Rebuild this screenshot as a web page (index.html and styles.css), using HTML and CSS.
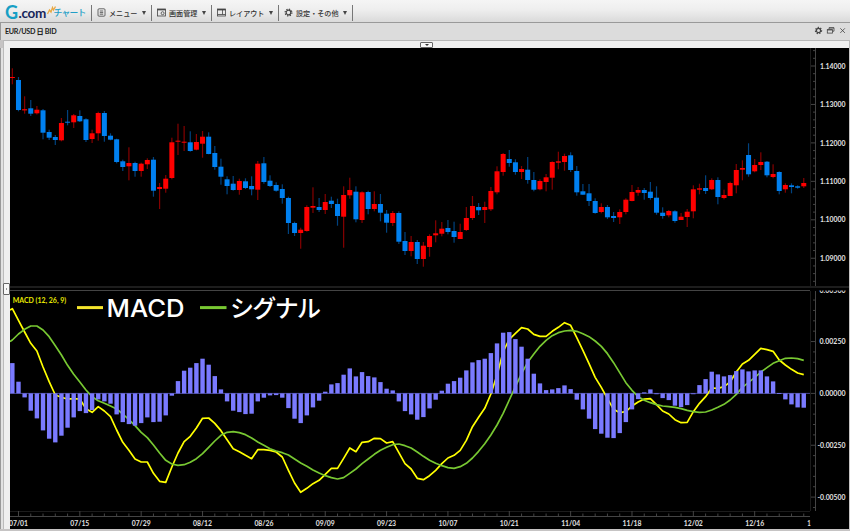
FILE: index.html
```html
<!DOCTYPE html>
<html lang="ja">
<head>
  <meta charset="UTF-8" />
  <meta name="viewport" content="width=device-width, initial-scale=1" />
  <title>G.comチャート</title>
  <link rel="stylesheet" href="styles.css">
</head>
<body>

  <header class="toolbar">
    <div class="logo">
      <span class="logo-g">G</span><span class="logo-com">.com</span>
      <svg class="logo-mark" viewBox="0 0 9 9"><path d="M0.5 8 L2.5 4 L4 6 L5.5 1.5 L6.5 4 L8.5 0.5" /></svg>
      <span class="logo-chart">チャート</span>
    </div>
    <div class="menu menu-main">
      <svg class="icon" viewBox="0 0 9 9"><rect x="1" y="0.8" width="7" height="7.4" rx="1" /><path d="M2.8 3H6.2M2.8 4.6H6.2M2.8 6.2H6.2" /></svg>
      <span class="label">メニュー</span><i class="arrow"></i>
    </div>
    <div class="menu menu-screen">
      <svg class="icon" viewBox="0 0 9 9"><rect x="0.5" y="1" width="8" height="7" /><path d="M0.5 1.7H8.5" stroke-width="1.3" /><circle cx="5.6" cy="5.2" r="1.5" /></svg>
      <span class="label">画面管理</span><i class="arrow"></i>
    </div>
    <div class="menu menu-layout">
      <svg class="icon" viewBox="0 0 9 9"><rect x="0.5" y="1" width="8" height="7" /><path d="M0.5 1.7H8.5" stroke-width="1.4" /><path d="M5.5 2V6.5M0.5 6.5H8.5" /></svg>
      <span class="label">レイアウト</span><i class="arrow"></i>
    </div>
    <div class="menu menu-settings">
      <svg class="icon gear" viewBox="0 0 9 9"><circle cx="4.5" cy="4.5" r="2.3" /><circle class="teeth" cx="4.5" cy="4.5" r="3.4" /></svg>
      <span class="label">設定・その他</span><i class="arrow"></i>
    </div>
  </header>

  <div class="titlebar">
    <span class="pair">EUR/USD 日 BID</span>
    <div class="window-buttons">
      <svg class="icon gear" viewBox="0 0 9 9"><circle cx="4.5" cy="4.5" r="2.1" /><circle class="teeth" cx="4.5" cy="4.5" r="3.1" /></svg>
      <svg class="icon" viewBox="0 0 9 9"><path d="M3 3V1.7H8V5.2H6.7M3 2H8" /><rect x="1.3" y="3.6" width="5.2" height="3.5" /><path d="M1.3 4H6.5" /></svg>
      <svg class="icon" viewBox="0 0 9 9"><path d="M2.3 2.3L6.9 6.9M6.9 2.3L2.3 6.9" /></svg>
    </div>
  </div>

  <div class="top-strip">
    <button class="toggle toggle-top" aria-label="top"><i></i></button>
  </div>

  <main class="workspace">
    <aside class="gutter">
      <button class="toggle toggle-left" aria-label="left"><i></i></button>
    </aside>
    <svg class="chart" id="chart" viewBox="10 48 839 481">
      <defs>
        <clipPath id="macd-clip"><rect x="10" y="290.5" width="839" height="239" /></clipPath>
      </defs>
      <g id="axes"></g>
      <g id="candles"></g>
      <g id="macd-panel" clip-path="url(#macd-clip)"></g>
      <text class="indicator" x="12.7" y="303.4" textLength="53.5" lengthAdjust="spacingAndGlyphs">MACD (12, 26, 9)</text>
      <path class="legend-line macd" d="M77 307.6H103" />
      <text class="legend legend-latin" x="106.500" y="316.800" textLength="78" lengthAdjust="spacingAndGlyphs">MACD</text>
      <path class="legend-line signal" d="M200 307.6H226.500" />
      <text class="legend" x="230" y="316.500" textLength="91">シグナル</text>
    </svg>
  </main>

  <script src="chart.js"></script>
</body>
</html>
```

FILE: styles.css
```css
* {
  box-sizing: border-box;
}
body {
  margin: 0;
  width: 850px;
  height: 531px;
  display: flex;
  flex-direction: column;
  overflow: hidden;
  background: #c6c4c4;
  font-family: Lato, "Noto Sans CJK JP", sans-serif;
  color: #222;
}
.toolbar {
  display: flex;
  align-items: center;
  height: 23px;
  padding: 4px 0 1px 5px;
  background: linear-gradient(#f5f5f5, #eee 45%, #dadada);
  border-bottom: 1px solid #999;
}
.logo {
  display: flex;
  align-items: flex-start;
  width: 86px;
  height: 18px;
  white-space: nowrap;
}
.logo-g {
  width: 13.5px;
  font: bold 18px/16px Lato, sans-serif;
  color: #169fc5;
}
.logo-com {
  width: 28px;
  font: bold 13.5px/18px Lato, sans-serif;
  letter-spacing: -0.3px;
  color: #17265a;
}
.logo-mark {
  width: 9px;
  height: 9px;
  margin: 2px -2px 0 0;
  fill: none;
  stroke: #e9a944;
  stroke-width: 1.3;
}
.logo-chart {
  font: 500 8.8px/18px "Noto Sans CJK JP", sans-serif;
  letter-spacing: -0.8px;
  color: #229ec6;
}
.menu {
  display: flex;
  align-items: center;
  height: 16px;
  padding-left: 5px;
  border-left: 1px solid #777;
}
.menu-main { width: 60px; }
.menu-screen { width: 60px; }
.menu-layout { width: 67px; }
.menu-settings {
  width: 75px;
  border-right: 1px solid #777;
}
.icon {
  width: 9px;
  height: 9px;
  flex: none;
  fill: none;
  stroke: #444;
  stroke-width: 0.8;
}
.gear circle { stroke-width: 1.2; }
.gear .teeth {
  stroke-width: 1.2;
  stroke-dasharray: 1.35 1.32;
}
.label {
  margin-left: 3px;
  font: 500 7.1px/16px "Noto Sans CJK JP", sans-serif;
  white-space: nowrap;
  color: #333;
}
.arrow {
  margin: 1px 5.5px 0 auto;
  border: 2px solid transparent;
  border-top: 4px solid #444;
  border-bottom: 0;
}
.titlebar {
  display: flex;
  justify-content: space-between;
  align-items: center;
  height: 17px;
  padding: 0 3px 2px 5px;
  background: #dcdcdc;
  border-left: 1px solid #999;
}
.pair {
  margin-left: -1px;
  font-size: 7.2px;
  font-weight: bold;
  letter-spacing: -0.3px;
}
.window-buttons {
  display: flex;
  gap: 3px;
}
.top-strip {
  display: flex;
  justify-content: center;
  height: 8px;
  margin-left: 3px;
  padding-top: 1px;
  background: #f0f0f0;
  border-top: 1px solid #b8b8b8;
  border-left: 1px solid #bbb;
  border-right: 1px solid #bbb;
}
.toggle {
  display: flex;
  align-items: center;
  justify-content: center;
  padding: 0;
  background: #f8f8f8;
  border: 1px solid #666;
  border-radius: 1px;
}
.toggle-top {
  width: 13px;
  height: 6px;
}
.toggle-top i {
  border: 2px solid transparent;
  border-top-color: #333;
  border-bottom: 0;
}
.workspace {
  display: flex;
  height: 481px;
}
.gutter {
  display: flex;
  align-items: flex-start;
  justify-content: flex-end;
  width: 10px;
  padding-top: 235px;
  background: linear-gradient(90deg, #999 0 1px, #e2e2e2 1px 3px, #bbb 3px 4px, #efefef 4px);
}
.toggle-left {
  width: 7px;
  height: 12px;
}
.toggle-left i {
  border: 1.5px solid transparent;
  border-left-color: #333;
  border-right: 0;
}
.chart {
  width: 839px;
  height: 481px;
  background: #000;
}
.axis {
  fill: none;
  stroke: #444;
  stroke-width: 1;
}
.axis-faint {
  fill: none;
  stroke: #1c1c1c;
}
.splitter { fill: #1d1d1d; }
.tick-label {
  fill: #e2e2e2;
  font-size: 7.4px;
  font-weight: bold;
}
.up { fill: #f00; }
.down { fill: #0080f0; }
.wick.up { fill: #850000; }
.wick.down { fill: #00427f; }
.bar { fill: #7a7aff; }
.zero {
  stroke: #5959b5;
  stroke-width: 0.8;
}
.line {
  fill: none;
  stroke-width: 1.7;
  stroke-linejoin: round;
}
.macd { stroke: #ff0; }
.signal { stroke: #78c832; }
.indicator {
  fill: #e8e800;
  font-size: 7px;
  font-weight: bold;
}
.legend {
  fill: #fff;
  font: 500 24px "Noto Sans CJK JP", sans-serif;
}
.legend-latin {
  font: 500 24.5px Inter, sans-serif;
}
.legend-line { stroke-width: 3; }
.legend-line.macd { stroke: #f5e52c; }
```

FILE: chart.js
```js
const X0 = 12.35;
const STEP = 6.135;

// high, body top, body bottom, low, direction (1 = up)
const candles = [
  [68.3,77,78,84.3,1],[77,80,110,111.3,0],[96.3,109.2,110.4,113.7,1],[100,108.3,113.7,116,0],[106,109.7,113.3,114.5,1],
  [109,110.3,132.7,139.3,0],[129.7,132,137.7,140,0],[135,137,140,145,0],[118,123,140.3,141.3,1],[110,121.7,122.7,125.3,0],
  [114,115.3,122.3,128,1],[110.3,116,121.3,122,0],[118.3,119.3,140,142,0],[129.7,133.3,139,143,1],[111.7,113,133.3,140.7,1],
  [111,113,136,141.7,0],[133.3,135.7,139.7,140.3,0],[138.7,139.3,162,163.3,0],[159.7,161.3,167,171,0],[147.3,163,166.3,180.3,1],
  [161.7,163,171,176.7,0],[162.7,163.7,171,176.7,1],[158.3,160,164.3,169,1],[157,159.7,190.7,196.7,0],[183,187,189,209,1],
  [175,178.7,188.7,192.7,1],[137.7,142.3,178,179.3,1],[123.7,140.7,141.7,155,1],[126,141.7,142.7,151,1],[131.3,142.3,151,151.7,0],
  [134,142,149.7,150.3,1],[131,136.7,143.7,157.7,1],[132.3,136.7,154,154.3,0],[146,153,167,169.7,0],[158.7,166.7,176.7,184.7,0],
  [176.3,179.3,186,194.3,0],[176,183.7,190,190.7,0],[178.7,181,190,194.7,1],[178.3,181.3,188,189,0],[176.3,186,189.3,195.3,0],
  [161,163.7,189.7,200,1],[157,163.3,182,183.7,0],[175.3,180.7,186,187,0],[182.3,185,190.7,191.7,0],[184.3,189,198,203.7,0],
  [196.7,198,223,234,0],[221.7,223,233,236,0],[227.7,229.7,233,248.7,1],[205.3,207,231,231.7,1],[187.3,206,207.7,213,1],
  [198,207,210,212,0],[194,202,210,214,1],[196.7,200.7,204,208,0],[198.7,204,216,225.7,0],[186.3,195,216.7,247.7,1],
  [177.7,190,195.3,198.7,1],[186.3,191.7,219.3,222.3,0],[191.3,192.3,220,223,1],[190.7,192,209,214.3,0],[191.3,204,209,211.3,1],
  [194,204,212.7,221.3,0],[210,213.7,222.7,232.7,0],[211,213,223,226,1],[211.3,213,241.7,244,0],[232,241,251,255,0],
  [236,242,251,256.3,1],[240,242,259,264,0],[242,245.7,259,266.7,1],[234.3,236,247,256.7,1],[220.3,233.3,235.3,242.3,1],
  [222,228.7,233.7,236.3,1],[220,228,232,234.3,0],[221.7,231,237,242.7,0],[223.7,232,239,239,1],[207,218,230,231,1],
  [196,206,218,220,1],[203,207,210.3,215,0],[201.7,207,210,223,1],[187,191,209.3,211,1],[166.3,171.3,192.3,194.3,1],
  [153,154,172,175.7,1],[150,159,163,166.7,0],[159.3,162.3,172,174.7,0],[166,169,172,179,1],[157,169.7,180,183.7,0],
  [172,180,189.7,191.3,0],[179.3,181,189.3,190.3,1],[174,177.3,182,191.3,1],[161.3,162,177.7,189.7,1],[151.7,161.3,162.7,169.3,1],
  [153.7,156,162,170.7,1],[152.3,155.3,170,172,0],[166,171,192.3,195.7,0],[184,191.3,194.7,195,0],[184,193.3,201,206,0],
  [198.3,201,213,213.7,0],[203.3,207,212,213.3,1],[205,207,217.3,219,0],[212,216,218,222,0],[209.3,212,217.3,224,1],
  [198.3,199.7,212,214.3,1],[185,192,201,201.3,1],[187,190,192.7,195.7,1],[188,190,193,199.7,0],[182,191.7,198,199.7,0],
  [186.3,197.7,212.7,214.7,0],[207.3,212.7,216,218.7,0],[210,211,215.3,217.3,1],[210.3,211.3,221,222.7,0],[213,216.7,220,220,1],
  [209,211.7,217,227,1],[185.3,189.3,211.3,218.3,1],[183.7,188.3,189.7,194.3,1],[175.3,188,191,194,0],[178.3,180,189.3,190,1],
  [177.3,180,197,204.3,0],[189.7,195,198,199.3,1],[181.7,183,196,196,1],[164,170,185.3,193.3,1],[160.3,168,169.7,180.3,1],
  [143.3,155,174.3,176.7,0],[159,165,171.3,172.3,1],[152.3,162,165,170,1],[161,161.7,175.3,177.3,0],[164.3,174,177,178.3,1],
  [171.3,172,191,194.3,0],[183.3,185,189.3,192.7,1],[183.3,185.3,187,193.3,0],[185.3,186.3,187.7,188.7,0],[178,183,186.3,188,1]
];

// bar heights from the zero line
const histogram = [
  30.3,11.7,-4,-17.3,-25,-37,-45.3,-49,-42.3,-34.3,-24,-17.7,-19.7,-16.7,-6,-8,-10.3,-21,-28.7,-30.7,
  -32.3,-29.7,-24,-28.7,-28.3,-22,-2.3,12.3,22.7,25.7,30.3,34.7,28.7,17.3,4,-8,-17.3,-18.7,-20.7,-20.3,
  -8,-4.3,-2,-1.7,-4.3,-14.7,-25.3,-29.7,-22,-14,-7.3,1.7,9,10.3,18.7,25,17,21.3,17.3,16,
  11.3,4.7,3,-8,-17.7,-21,-26.3,-23.7,-15,-6.3,2.7,9.7,12.3,15.7,23,31,33.3,34.7,40.3,50,
  60.7,61.3,54.3,46.7,34.7,19.7,10,3.3,4,5.3,8,4.3,-6.3,-16,-25.3,-35.7,-40.3,-44.3,-44.7,-39.7,
  -28.7,-16,-5.7,1,4,-0.3,-4.7,-6.7,-12.3,-13.7,-11.7,-0.3,8.3,14.3,21.7,19,17,18.3,22.3,24,
  22,23,23,17,12,0.3,-6,-11,-14,-14.3
];

// line values, in thirds of a pixel below y = 280
const macd = [
  86,121,156,190,213,261,305,345,352,357,356,357,386,397,380,393,410,450,487,511,
  537,546,546,580,604,607,561,519,485,469,444,415,414,430,452,479,506,515,526,536,
  509,509,511,516,531,571,609,637,625,611,601,583,565,565,535,504,515,487,485,475,
  476,489,485,518,551,567,595,599,587,571,551,534,526,511,481,440,412,385,342,286,
  215,178,160,143,147,163,169,169,154,142,128,136,173,211,251,292,322,356,388,398,
  395,378,366,357,356,374,393,402,419,428,427,395,370,350,324,325,320,306,276,252,
  241,223,205,209,214,240,255,268,279,284
];
const signal = [
  180,162,148,138,138,150,170,197,225,256,283,306,330,350,362,370,378,387,402,419,
  437,457,473,495,519,541,552,556,554,547,536,521,502,483,466,457,455,458,464,474,
  486,496,506,513,518,525,537,549,559,570,579,587,593,597,593,580,567,551,537,523,
  511,502,494,492,497,504,516,529,541,550,557,563,565,560,550,534,514,491,465,435,
  400,360,320,281,247,222,199,181,167,158,153,151,154,161,170,183,199,221,248,278,
  308,331,350,361,368,374,378,380,382,386,391,395,397,396,390,382,373,360,343,322,
  307,293,276,263,250,242,235,234,236,241
];

const x = i => X0 + i * STEP;
const rect = (cls, left, top, w, h) =>
  `<rect class="${cls}" x="${left.toFixed(2)}" y="${top.toFixed(2)}" width="${w}" height="${Math.max(h, 0.8).toFixed(2)}" />`;
const label = (tx, ty, text, anchor, len) =>
  `<text class="tick-label" x="${tx}" y="${ty}" text-anchor="${anchor}" textLength="${len}" lengthAdjust="spacingAndGlyphs">${text}</text>`;
const points = (values, start) =>
  [`10,${280 + start / 3}`].concat(values.map((v, i) => `${x(i).toFixed(2)},${(280 + v / 3).toFixed(2)}`)).join(" ");

// candles
document.getElementById("candles").innerHTML = candles.map(([high, top, bottom, low, up], i) => {
  const dir = up ? "up" : "down";
  const left = Math.max(x(i) - 2.5, 10);
  return rect(`wick ${dir}`, x(i) - 0.6, high, 1.2, low - high) +
    rect(dir, left, top, (x(i) + 2.5 - left).toFixed(2), bottom - top);
}).join("");

// axes and splitter
let axes = rect("splitter", 10, 286, 839, 2);
axes += `<path class="axis" d="M10 290.5H810M815.5 48V286M815.5 291V511M10 516.5H810" />`;
axes += `<path class="axis-faint" d="M810.5 48V286M810.5 291V511M10 511.5H810" />`;

let ticks = "";
for (let n = -2; n <= 28; n++) {
  const y = 66 + n * 7.69;
  if (y > 48 && y < 285) ticks += `M${n % 5 ? 813 : 811} ${y}H815`;
}
for (let n = -9; n <= 11; n++) {
  ticks += `M${n % 5 ? 813 : 811} ${393.4 + n * 10.37}H815`;
}
for (let n = 0; n < 65; n++) {
  ticks += `M${x(1 + n * 2)} ${n % 5 ? 513.5 : 511}V516`;
}
axes += `<path class="axis" d="${ticks}" />`;

["1.14000", "1.13000", "1.12000", "1.11000", "1.10000", "1.09000"].forEach((t, n) => {
  axes += label(820, 68.6 + n * 38.45, t, "start", 25.5);
});
["0.00250", "0.00000", "-0.00250", "-0.00500"].forEach((t, n) => {
  axes += label(845.5, 344.2 + n * 51.85, t, "end", t[0] === "-" ? 28 : 26);
});
axes += `<g clip-path="url(#macd-clip)">${label(845.5, 292.6, "0.00500", "end", 26)}</g>`;

["07/01", "07/15", "07/29", "08/12", "08/26", "09/09", "09/23", "10/07", "10/21", "11/04", "11/18", "12/02", "12/16"].forEach((t, n) => {
  axes += label(x(1 + n * 10), 525.6, t, "middle", 19);
});
axes += label(809, 525.6, "1", "middle", 3.5);
document.getElementById("axes").innerHTML = axes;

// lines go under the histogram bars
document.getElementById("macd-panel").innerHTML =
  `<path class="zero" d="M10 393.4H810" />` +
  `<polyline class="line macd" points="${points(macd, 90)}" />` +
  `<polyline class="line signal" points="${points(signal, 185)}" />` +
  histogram.map((h, i) => {
    const left = Math.max(x(i) - 2.2, 10);
    return rect("bar", left, h > 0 ? 393.4 - h : 393.4, (x(i) + 2.2 - left).toFixed(2), Math.abs(h));
  }).join("");
```
